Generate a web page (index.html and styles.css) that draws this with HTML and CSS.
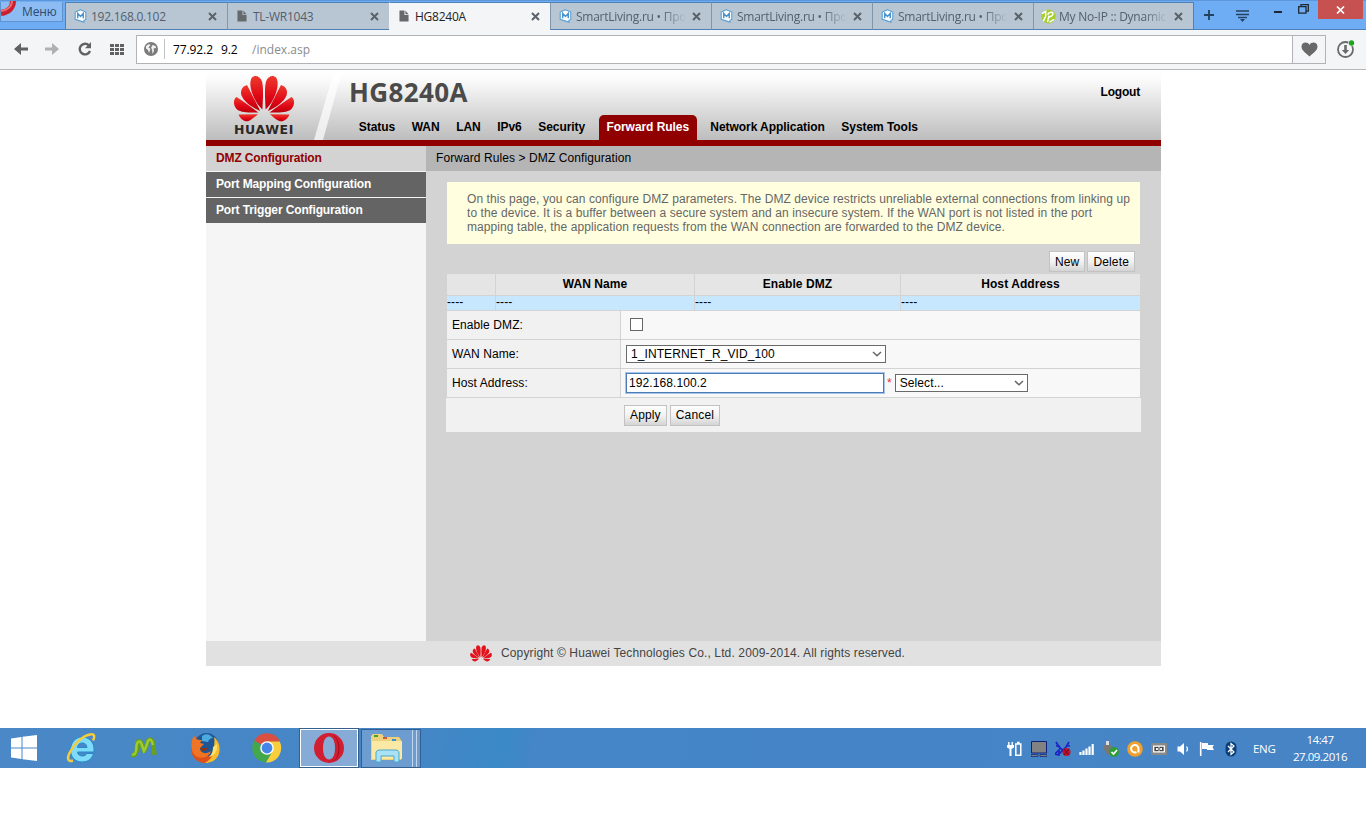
FILE: index.html
```html
<!DOCTYPE html>
<html lang="ru">
<head>
    <meta charset="UTF-8">
    <title>HG8240A</title>
    <link rel="stylesheet" href="styles.css">
</head>
<body>
    <svg width="0" height="0" class="defs">
        <defs>
            <linearGradient id="petal" x1="0" y1="0" x2="0" y2="1">
                <stop offset="0" stop-color="#ee3a2c"/>
                <stop offset="0.6" stop-color="#e00716"/>
                <stop offset="1" stop-color="#b8000c"/>
            </linearGradient>
            <g id="petals">
                <path d="M31.6 34C31 23 30.4 12 32 6 34 0.5 39 -1 42 2 45 6 43.5 14 41 20 38 27 35 31 31.6 34z"/>
                <path d="M33.8 35.5C38 27 43 17 47 9.5 52 11 54 15 52.500 20 50 26 43 31.5 33.8 35.5z"/>
                <path d="M35.5 37C42 32.500 50 26 57.5 21.5 61 24 61 30 57 34 52 37.5 44 37 35.5 37z"/>
                <path d="M36 38.7L55.5 39C54 43 50 46.5 46 45.7 42 44.5 39 41 36 38.7z"/>
            </g>
            <symbol id="flower" viewBox="0 0 60 47">
                <use href="#petals"/>
                <use href="#petals" transform="translate(60 0) scale(-1 1)"/>
            </symbol>
            <symbol id="close" viewBox="0 0 9 9"><path d="M1 1l7 7M8 1l-7 7" stroke="#5b6269" stroke-width="2"/></symbol>
            <symbol id="doc" viewBox="0 0 11 13"><path d="M0.5 0.5h5.500v5h4.500v7h-10z" fill="#66696c"/><path d="M7 0.5l3.500 4h-3.500z" fill="#66696c"/></symbol>
            <symbol id="m" viewBox="0 0 14 15">
                <path d="M7 0.7l5.700 2.500v8l-2 1v2l-3.500-1.200-5.900-2V3.200z" fill="#fff" stroke="#5ba0d4" stroke-width="1.200"/>
                <path d="M4 10V4.800l3 3.200 3-3.200V10" fill="none" stroke="#4b93cc" stroke-width="1.600"/>
            </symbol>
            <symbol id="chevron" viewBox="0 0 10 6"><path d="M1 1l4 3.800L9 1" fill="none" stroke="#666" stroke-width="1.500"/></symbol>
        </defs>
    </svg>

    <div class="tabbar">
        <div class="menu">
            <svg class="menu-o" width="18" height="16" viewBox="0 0 18 16"><path d="M13 0c0 6-4 11-12 12" fill="none" stroke="#c9202f" stroke-width="6"/><path d="M12 0c0 5-4 9-11 10" fill="none" stroke="#f06a72" stroke-width="2"/></svg>
            <span>Меню</span>
        </div>
        <div class="tab first"><svg class="fav"><use href="#m"/></svg><span class="name">192.168.0.102</span><svg class="x"><use href="#close"/></svg></div>
        <div class="tab"><svg class="fav doc"><use href="#doc"/></svg><span class="name">TL-WR1043</span><svg class="x"><use href="#close"/></svg></div>
        <div class="tab active"><svg class="fav doc"><use href="#doc"/></svg><span class="name">HG8240A</span><svg class="x"><use href="#close"/></svg></div>
        <div class="tab"><svg class="fav"><use href="#m"/></svg><span class="name fade">SmartLiving.ru • Про</span><svg class="x"><use href="#close"/></svg></div>
        <div class="tab"><svg class="fav"><use href="#m"/></svg><span class="name fade">SmartLiving.ru • Про</span><svg class="x"><use href="#close"/></svg></div>
        <div class="tab"><svg class="fav"><use href="#m"/></svg><span class="name fade">SmartLiving.ru • Про</span><svg class="x"><use href="#close"/></svg></div>
        <div class="tab last">
            <svg class="fav noip" viewBox="0 0 16 16"><circle cx="8" cy="8" r="7.500" fill="#a5cd2b"/><path d="M1 5l4-2.500v5L2.500 13M7 14l1.500-7M7 6c2-4 7-3 5.500 0-1 2-3 2.500-4.500 3M9 14l5-3" fill="none" stroke="#fff" stroke-width="1.600"/></svg>
            <span class="name fade">My No-IP :: Dynamic</span><svg class="x"><use href="#close"/></svg>
        </div>
        <svg class="plus" width="10" height="10" viewBox="0 0 10 10"><path d="M5 0v10M0 5h10" stroke="#24415f" stroke-width="1.800"/></svg>
        <svg class="list" width="13" height="12" viewBox="0 0 13 12"><path d="M0 1h13M0 4.500h13" stroke="#24415f" stroke-width="1.600"/><path d="M2 7.500h9" stroke="#24415f" stroke-width="1.400"/><path d="M4 9h5l-2.500 3z" fill="#24415f"/></svg>
        <svg class="win-min" width="9" height="3" viewBox="0 0 9 3"><path d="M0 2h8" stroke="#1d2833" stroke-width="2"/></svg>
        <svg class="win-max" width="11" height="10" viewBox="0 0 11 10"><path d="M0.700 2.700h7.300v6.500H0.700zM3 2.500V0.700h7.300v6.500H8" fill="none" stroke="#1d2833" stroke-width="1.300"/></svg>
        <div class="win-close"><svg width="9" height="8" viewBox="0 0 9 8"><path d="M1 0.500l7 7M8 0.500l-7 7" stroke="#fff" stroke-width="1.700"/></svg></div>
    </div>

    <div class="toolbar">
        <svg class="back" width="14" height="12" viewBox="0 0 14 12"><path d="M7 0v4.500h7v3H7V12L0 6z" fill="#616161"/></svg>
        <svg class="forward" width="14" height="12" viewBox="0 0 14 12"><path d="M7 0v4.500H0v3h7V12l7-6z" fill="#b0b0b0"/></svg>
        <svg class="reload" width="14" height="14" viewBox="0 0 14 14"><path d="M11 3.500A5.300 5.300 0 1 0 12 9" fill="none" stroke="#616161" stroke-width="2.400"/><path d="M13 0v6.200H7z" fill="#616161"/></svg>
        <svg class="dial" width="14" height="11" viewBox="0 0 14 11"><path d="M0 1.500h14M0 5.500h14M0 9.500h14" stroke="#616161" stroke-width="3" stroke-dasharray="4 1"/></svg>
        <div class="address">
            <svg width="14" height="14" viewBox="0 0 14 14"><circle cx="7" cy="7" r="7" fill="#7b7b7b"/><path d="M2 4l3-2 1.500 1-2 2.500 2 1.500-1.500 4-1-3-2-1.500zM8.500 3l3 1 0.500 2-2.500 0.500 0.500 2.500-1.500 3-0.500-5-1-1z" fill="#f1f1f1"/></svg>
            <i></i>
            <span class="ip">77.92.2</span><span class="ip two">9.2</span><span class="path">/index.asp</span>
        </div>
        <div class="heart"><svg width="17" height="15" viewBox="0 0 17 15"><path d="M8.500 14.500C5 11 0.500 8.500 0.500 4.700 0.500 0 6.500-0.800 8.500 3c2-3.800 8-3 8 1.700 0 3.800-4.500 6.300-8 9.800z" fill="#686868"/></svg></div>
        <svg class="download" width="18" height="18" viewBox="0 0 18 18"><circle cx="8.500" cy="9.500" r="7.500" fill="none" stroke="#6a6a6a" stroke-width="1.800"/><path d="M7.200 5h2.600v5h2.400l-3.700 4-3.700-4h2.400z" fill="#6a6a6a"/><circle cx="14.500" cy="3" r="3.300" fill="#f4f5f7"/><circle cx="14.500" cy="3" r="2.700" fill="#1ea41e"/></svg>
    </div>

    <div class="page">
        <div class="header">
            <div class="logo">
                <svg width="60" height="48"><use href="#flower" fill="url(#petal)"/></svg>
                <span>HUAWEI</span>
            </div>
            <svg class="slash" width="28" height="69" viewBox="0 0 28 69"><path d="M20 0h8L9 69H0z" fill="#fff" opacity="0.700"/></svg>
            <div class="header-main">
                <div class="top">
                    <h1>HG8240A</h1>
                    <a class="logout">Logout</a>
                </div>
                <div class="nav">
                    <a>Status</a>
                    <a>WAN</a>
                    <a>LAN</a>
                    <a>IPv6</a>
                    <a>Security</a>
                    <a class="current">Forward Rules</a>
                    <a>Network Application</a>
                    <a>System Tools</a>
                </div>
            </div>
        </div>
        <div class="main">
            <div class="sidebar">
                <a class="selected">DMZ Configuration</a>
                <a>Port Mapping Configuration</a>
                <a>Port Trigger Configuration</a>
            </div>
            <div class="content">
                <div class="location">Forward Rules &gt; DMZ Configuration</div>
                <div class="note">
                    On this page, you can configure DMZ parameters. The DMZ device restricts unreliable external connections from linking up<br>
                    to the device. It is a buffer between a secure system and an insecure system. If the WAN port is not listed in the port<br>
                    mapping table, the application requests from the WAN connection are forwarded to the DMZ device.
                </div>
                <div class="table-buttons"><button>New</button><button>Delete</button></div>
                <table class="list-table">
                    <tr><th class="c1"></th><th class="c2">WAN Name</th><th class="c3">Enable DMZ</th><th>Host Address</th></tr>
                    <tr class="row"><td>----</td><td>----</td><td>----</td><td>----</td></tr>
                </table>
                <div class="form">
                    <div class="line"><label>Enable DMZ:</label><div class="field"><span class="check"></span></div></div>
                    <div class="line"><label>WAN Name:</label><div class="field"><span class="select wan">1_INTERNET_R_VID_100<svg><use href="#chevron"/></svg></span></div></div>
                    <div class="line"><label>Host Address:</label><div class="field"><span class="input">192.168.100.2</span><em>*</em><span class="select host">Select...<svg><use href="#chevron"/></svg></span></div></div>
                    <div class="apply"><button>Apply</button><button>Cancel</button></div>
                </div>
            </div>
        </div>
        <div class="footer">
            <svg width="22" height="17"><use href="#flower" fill="#e2131d"/></svg>
            <span>Copyright © Huawei Technologies Co., Ltd. 2009-2014. All rights reserved.</span>
        </div>
    </div>

    <div class="taskbar">
        <div class="start"><svg width="26" height="26" viewBox="0 0 26 26"><path d="M0 3.500l10.500-1.500v10.500H0zM11.500 1.800L26 0v12.500H11.500zM0 13.500h10.500V24L0 22.500zM11.500 13.500H26V26l-14.500-1.800z" fill="#fff"/></svg></div>
        <div class="app">
            <svg width="32" height="32" viewBox="0 0 32 32"><path fill-rule="evenodd" d="M17 5c7 0 12 5 12 12v3H12.500c0.500 3 2.500 4 5 4 2 0 3.500-1 4.500-2.500h6.500C27 27 23 30 17 30 10 30 5.500 25 5.500 18S10 5 17 5zm-4.500 10.500h9.500c-0.300-3-2-4.500-4.700-4.500s-4.500 1.500-4.800 4.500z" fill="#7fdcf8" stroke="#2389cb" stroke-width="1"/><path d="M8 28.500c-6 2-6-3-3-8.500C9 12 17 4 25 2.500c5-1 5 2 3 6" fill="none" stroke="#f3cc3f" stroke-width="2.500"/></svg>
        </div>
        <div class="app"><svg width="28" height="24" viewBox="0 0 28 24"><path d="M2.500 18.500C7 21 8 15 8 10 8 4 11 4 12.500 8L15 15C17 12 18 8 19 5 21 2 24 4 24.500 9 25 13 25 16 25.500 19" fill="none" stroke="#679f1e" stroke-width="4.500" stroke-linejoin="round"/><path d="M3 18C6.500 20 7.500 15 7.500 10 8 5 11 4 12.500 8L15 15C17 12 18 8 19 5 21 2 23 4 24 9" fill="none" stroke="#9fca2e" stroke-width="2.500"/></svg></div>
        <div class="app"><svg width="32" height="32" viewBox="0 0 32 32"><circle cx="16" cy="17" r="14" fill="#dd4f1b"/><circle cx="17.500" cy="12.500" r="11.500" fill="#1f5796"/><path d="M13 4c4-3 8-2 11 2-2 0-4 1-5 4l-6-1z" fill="#4aa9dd"/><path d="M25 5c6 5 7 13 4 19-3 5-8 7-13 7 6-4 9-8 9-14 0-5 1-8 0-12z" fill="#f7bd2d"/><path d="M28 12c1 6-2 12-8 13 3-3 4-6 4-10z" fill="#fbe06a"/><path d="M3 9c0-3 2-4 3-5 0 3 2 4 7 4l-2 3 4 1-4 4c0 5 6 7 11 3-2 8-14 9-18 2C2 17 2 13 3 9z" fill="#ef7524"/><path d="M11 16c3 1 6-1 8 0l-3 3c-3 0-5-1-5-3z" fill="#94340e"/></svg></div>
        <div class="app"><svg width="30" height="30" viewBox="0 0 30 30"><path d="M15 15L2.300 7.600A14.500 14.500 0 0 1 27.700 7.800z" fill="#d94f40"/><path d="M15 15h-2L2.300 7.600A14.500 14.500 0 0 0 14 29.500l7-12z" fill="#42a84b"/><path d="M15 8.500h12.700A14.500 14.500 0 0 1 14 29.500l7-12z" fill="#f9ce3c"/><circle cx="15" cy="15" r="6.800" fill="#fff"/><circle cx="15" cy="15" r="5.400" fill="#4585e8"/></svg></div>
        <div class="app running"><svg width="32" height="32" viewBox="0 0 32 32"><path fill-rule="evenodd" d="M16 1a15 15 0 1 0 0 30 15 15 0 1 0 0-30zm0 3.500c4 0 6 5 6 11.500s-2 11.500-6 11.500S10 22.500 10 16 12 4.500 16 4.500z" fill="#d11e30"/><path d="M20 3c8 4 9 22 1 26 6-6 6-20-1-26z" fill="#a60f20"/></svg></div>
        <div class="app explorer">
            <svg width="34" height="30" viewBox="0 0 34 30"><path d="M1 3l2-2h9l2 3h15l2 3v20H1z" fill="#ecd27c"/><path d="M2 8h30v18H2z" fill="#fae9a5"/><path d="M4 2h4v2H4z" fill="#43a531"/><path d="M13 4h4v2h-4z" fill="#d25a35"/><path d="M22 6h4v2h-4z" fill="#3a91cf"/><path d="M6 29V19c1-2 3-2 4-2h15c3 0 4 1 4 3v9h-5v-6H11v6z" fill="#a9e2f4" stroke="#4ca7cd"/></svg>
            <i></i><i></i>
        </div>
        <div class="tray">
            <svg viewBox="0 0 16 16"><path d="M8.800 3h5v11.300h-5zM10 1.500h2.600" fill="none" stroke="#fff" stroke-width="1.500"/><path d="M1.800 1v3M5.200 1v3" stroke="#fff" stroke-width="1.400"/><path d="M0 4h7v2.500L4.500 8v7h-2V8L0 6.500z" fill="#fff"/></svg>
            <svg viewBox="0 0 16 16"><path d="M0.500 0.500h15v11.500H0.500z" fill="#828282" stroke="#10217a"/><path d="M0 13.500h7v2H0zM9 13.500h7v2H9z" fill="#808080" stroke="#10217a" stroke-width="0.700"/></svg>
            <svg viewBox="0 0 16 16"><path d="M1 1l3 5 9 8M14 1l-3 5-8 8M1 5h4M11 5h4M0 13l4-4v5z" fill="none" stroke="#1b24c4" stroke-width="1.700"/><circle cx="11.500" cy="11" r="4" fill="#c51228"/><path d="M9 8l5 6M14 8l-5 6" stroke="#4a0b26" stroke-width="0.800"/></svg>
            <svg viewBox="0 0 16 16"><path d="M1.500 14v-3M4.500 14V9.500M7.500 14V7.500M10.500 14V5.500M13.700 14V3" stroke="#fff" stroke-width="2.200"/></svg>
            <svg viewBox="0 0 16 16"><path d="M2 0h5v4h1v5c0 2-2 3-3 6L2 10 1 9V4h1z" fill="#777"/><path d="M3 0h3v4H3z" fill="#ddd"/><circle cx="11" cy="11" r="5" fill="#2f9e38"/><path d="M8.500 11l2 2 3.500-4" fill="none" stroke="#fff" stroke-width="1.700"/></svg>
            <svg viewBox="0 0 16 16"><circle cx="8" cy="8" r="7.800" fill="#f0a02b"/><path d="M9.500 11A3.700 3.700 0 1 1 11.500 8v3.500" fill="none" stroke="#fff" stroke-width="2"/></svg>
            <svg viewBox="0 0 16 16"><rect x="0" y="2" width="16" height="12" rx="1" fill="#898989"/><path d="M2.700 5.200h10.600v5.600H2.700z" fill="#444" stroke="#fff" stroke-width="1.300"/><path d="M5 7h1.800v2H5zM9.200 7H11v2H9.200zM7.600 5h0.800v6h-0.800z" fill="#fff"/></svg>
            <svg viewBox="0 0 16 16"><path d="M2.500 5.500h2.500L9 2v12L5 10.500H2.500z" fill="#fff"/><path d="M11.500 5.500q2 2.500 0 5" fill="none" stroke="#fff" stroke-width="1.200"/></svg>
            <svg viewBox="0 0 16 16"><path d="M1.700 1v14" stroke="#fff" stroke-width="1.600"/><path d="M3 2h6v2h6l-1.500 2L15 9H8V8H3z" fill="#fff"/></svg>
            <svg viewBox="0 0 16 16"><rect x="2.500" y="0.500" width="11" height="15" rx="5.500" fill="#093e78"/><path d="M5 5l6 6-3 2.500v-11L11 5l-6 6" fill="none" stroke="#fff" stroke-width="1.200"/></svg>
        </div>
        <span class="lang">ENG</span>
        <div class="clock">14:47<br>27.09.2016</div>
    </div>
</body>
</html>
```
FILE: styles.css
```css
* {
    box-sizing: border-box;
}
body {
    margin: 0;
    background-color: #fff;
    font-family: "Liberation Sans", Arial, sans-serif;
    font-size: 12px;
    color: #000;
}
svg {
    display: block;
    flex: none;
}
.defs {
    position: absolute;
}

/* browser */
.tabbar {
    display: flex;
    align-items: flex-start;
    height: 30px;
    padding-top: 2px;
    background-color: #6eacf3;
    border-bottom: 1px solid #4e81b8;
    box-shadow: inset 0 1px 0 #5d97d9;
    font-family: "Open Sans", "Noto Sans", sans-serif;
    color: #53606c;
}
.menu {
    display: flex;
    width: 63px;
    height: 20px;
    margin-right: 2px;
    background-color: #8dbcf5;
    border: 1px solid #5c93d0;
    border-top: none;
    line-height: 19px;
    color: #2c4a6c;
}
.menu-o {
    width: 18px;
    margin: -1px 4px 0 -1px;
}
.menu span {
    letter-spacing: -0.1px;
}
.tab {
    display: flex;
    align-items: center;
    width: 161px;
    height: 28px;
    padding: 0 10.5px 0 8px;
    background-color: #b8c6d4;
    border-left: 1px solid #8195ab;
    border-top: 1px solid #4e81b8;
    border-bottom: 1px solid #4e81b8;
}
.tab.first {
    width: 162px;
    border-left-color: #4e81b8;
}
.tab:nth-child(3) {
    width: 162px;
}
.tab.last {
    border-right: 1px solid #4e81b8;
}
.tab.active {
    background-color: #f4f5f7;
    border-bottom-color: #f4f5f7;
    border-left-color: #f4f5f7;
    color: #222;
}
.fav {
    width: 13px;
    height: 14px;
    margin-right: 4px;
}
.fav.doc {
    width: 10px;
    height: 12px;
    margin: 0 6px 0 1px;
}
.fav.noip {
    width: 15px;
    height: 15px;
    margin: 0 3px 0 -1px;
}
.name {
    flex: 1;
    overflow: hidden;
    margin: 1px 6px 0 0;
    white-space: nowrap;
    line-height: 18px;
    letter-spacing: -0.25px;
}
.fade {
    -webkit-mask-image: linear-gradient(to right, #000 78%, transparent);
    mask-image: linear-gradient(to right, #000 78%, transparent);
}
.x {
    width: 9px;
    height: 9px;
}
.plus {
    margin: 8px 0 0 10px;
}
.list {
    margin: 8px 0 0 22px;
}
.win-min {
    margin: 8px 0 0 25px;
}
.win-max {
    margin: 2px 0 0 15px;
}
.win-close {
    display: flex;
    justify-content: center;
    align-items: center;
    width: 45px;
    height: 19px;
    margin: -2px 3px 0 auto;
    background-color: #c75050;
}
.toolbar {
    display: flex;
    align-items: center;
    height: 40px;
    padding: 0 11px 1px 14px;
    background-color: #f4f5f7;
    border-bottom: 1px solid #b5b7ba;
    font-family: "Open Sans", "Noto Sans", sans-serif;
}
.forward { margin-left: 17px; }
.reload { margin-left: 19px; }
.dial { margin-left: 18px; }
.address {
    display: flex;
    align-items: center;
    flex: 1;
    height: 29px;
    margin-left: 12px;
    padding-left: 7px;
    background-color: #fff;
    border: 1px solid #b1b3b6;
}
.address i {
    width: 1px;
    height: 20px;
    margin: 0 8px 0 6px;
    background-color: #c4c4c4;
}
.ip {
    width: 48px;
    letter-spacing: -0.1px;
}
.ip.two {
    width: 31px;
}
.path {
    color: #8b8b8b;
}
.heart {
    display: flex;
    justify-content: center;
    align-items: center;
    width: 33px;
    height: 29px;
    border: 1px solid #b1b3b6;
    border-left: none;
}
.download {
    margin-left: 11px;
}

/* router page */
.page {
    width: 955px;
    margin: 0 0 0 206px;
    padding-top: 1px;
}
.header {
    display: flex;
    height: 75px;
    background: linear-gradient(#fff, #fbfbfb 12%, #bdbdbd) no-repeat;
    border-bottom: 6px solid #900000;
}
.logo {
    width: 108px;
    padding: 4px 0 0 28px;
}
.logo span {
    display: block;
    font: bold 12.5px/14px "DejaVu Sans", sans-serif;
    letter-spacing: 0.6px;
    color: #2d2828;
}
.slash {
    margin-right: 7px;
}
.header-main {
    flex: 1;
}
.top {
    display: flex;
    justify-content: space-between;
    height: 44px;
    padding-right: 21px;
}
h1 {
    margin: 3px 0 0;
    font: bold 26px/36px "Open Sans", "Noto Sans", sans-serif;
    letter-spacing: 0.4px;
    color: #4a4a4a;
}
.logout {
    margin-top: 14px;
    font-weight: bold;
    letter-spacing: -0.2px;
}
.nav {
    display: flex;
    padding-left: 1.5px;
    font-weight: bold;
    line-height: 24px;
    letter-spacing: -0.06px;
}
.nav a {
    height: 25px;
    padding: 0 8.3px;
}
.nav .current {
    margin: 0 5.5px;
    padding: 0 7.5px;
    background-color: #900000;
    border-radius: 5px 5px 0 0;
    color: #fff;
}
.main {
    display: flex;
    height: 495px;
}
.sidebar {
    width: 220px;
    background-color: #f5f5f5;
}
.sidebar a {
    display: block;
    height: 26px;
    padding-left: 10px;
    background-color: #646464;
    border-bottom: 1px solid #f5f5f5;
    font-weight: bold;
    line-height: 24px;
    letter-spacing: -0.13px;
    color: #fff;
}
.sidebar .selected {
    background-color: #d3d3d3;
    color: #900000;
}
.content {
    flex: 1;
    background-color: #d3d3d3;
    letter-spacing: 0.085px;
}
.location {
    height: 25px;
    padding-left: 10px;
    background-color: #b5b5b5;
    line-height: 24px;
}
.note {
    width: 693px;
    height: 62px;
    margin: 11px 0 0 21px;
    padding: 10px 0 0 20px;
    background-color: #ffffe0;
    line-height: 14px;
    color: #666;
    white-space: nowrap;
}
.table-buttons {
    display: flex;
    justify-content: flex-end;
    gap: 2px;
    width: 709px;
    height: 30px;
    padding-top: 7px;
}
button {
    height: 21px;
    padding: 0 5px;
    background: linear-gradient(#fdfdfd, #f2f2f2 50%, #d4d4d4);
    border: 1px solid #c2c2c2;
    font-family: "Liberation Sans", Arial, sans-serif;
    font-size: 12px;
    letter-spacing: 0.15px;
    color: #000;
}
.list-table {
    width: 695px;
    margin-left: 20px;
    border-collapse: collapse;
    table-layout: fixed;
    background-color: #e5e5e5;
}
.list-table th,
.list-table td {
    height: 21px;
    padding: 0;
    border: 1px solid #d3d3d3;
    border-top: none;
}
.list-table .c1 { width: 49px; }
.list-table .c2 { width: 199px; }
.list-table .c3 { width: 206px; }
.list-table .row td {
    height: 15px;
    line-height: 13px;
    background-color: #c7e7ff;
}
.form {
    width: 695px;
    margin-left: 20px;
    background-color: #f1f1f1;
}
.line {
    display: flex;
    height: 29px;
    border: 1px solid #d3d3d3;
    border-top: none;
    line-height: 28px;
}
.line label {
    width: 174px;
    padding-left: 5px;
    border-right: 1px solid #d3d3d3;
}
.field {
    display: flex;
    flex: 1;
    align-items: center;
    padding-left: 5px;
    background-color: #f8f8f8;
}
.check {
    width: 13px;
    height: 13px;
    margin-left: 4px;
    background-color: #fff;
    border: 1px solid #666;
}
.select {
    display: flex;
    align-items: center;
    justify-content: space-between;
    height: 18px;
    padding: 0 3px 0 4px;
    background-color: #fff;
    border: 1px solid #6a6a6a;
    line-height: 16px;
}
.select svg {
    width: 10px;
    height: 6px;
}
.wan { width: 260px; }
.host { width: 133px; }
.input {
    width: 258px;
    height: 20px;
    padding-left: 2px;
    background-color: #fff;
    border: 1px solid #4a7ab8;
    box-shadow: 0 0 0 1px #a9c4e6;
    line-height: 18px;
}
em {
    margin: 0 3px 0 3px;
    font-style: normal;
    line-height: 20px;
    color: #e0303a;
}
.apply {
    display: flex;
    gap: 3px;
    height: 34px;
    padding: 7px 0 0 178px;
}
.footer {
    display: flex;
    height: 25px;
    padding: 4px 0 0 264px;
    background-color: #e1e1e1;
    line-height: 16px;
    color: #444;
}
.footer span {
    margin-left: 9px;
    letter-spacing: 0.125px;
}

/* windows taskbar */
.taskbar {
    display: flex;
    align-items: center;
    height: 40px;
    margin-top: 62px;
    background: linear-gradient(100deg, #4a88c7, #4686c6 30%, #3a89c6 37%, #4486c8 39%, #4784c5);
    font-family: "Open Sans", "Noto Sans", sans-serif;
    color: #fff;
}
.start {
    width: 50px;
    padding-left: 11px;
}
.app {
    display: flex;
    justify-content: center;
    align-items: center;
    width: 62px;
    height: 40px;
}
.running {
    width: 58px;
    height: 38px;
    margin: 0 3px 0 2px;
    background-color: #85abd6;
    border: 1px solid #fff;
    outline: 1px solid #33608f;
}
.explorer {
    justify-content: flex-start;
    width: 60px;
    height: 39px;
    padding-left: 8px;
    background-color: #6c9cd0;
    border: 1px solid #345f91;
}
.explorer i {
    width: 4px;
    height: 37px;
    border-left: 1px solid #c3d8ef;
}
.explorer svg {
    margin-right: 8px;
}
.tray {
    display: flex;
    gap: 8px;
    margin-left: auto;
    padding-top: 1px;
}
.tray svg {
    width: 16px;
    height: 16px;
}
.lang {
    width: 24px;
    margin-left: 14px;
    font-size: 11.5px;
    letter-spacing: -0.3px;
}
.clock {
    width: 86px;
    margin-left: 3px;
    padding: 0 6px 0 0;
    text-align: center;
    font-size: 11.5px;
    line-height: 17px;
    letter-spacing: -0.45px;
}
```
